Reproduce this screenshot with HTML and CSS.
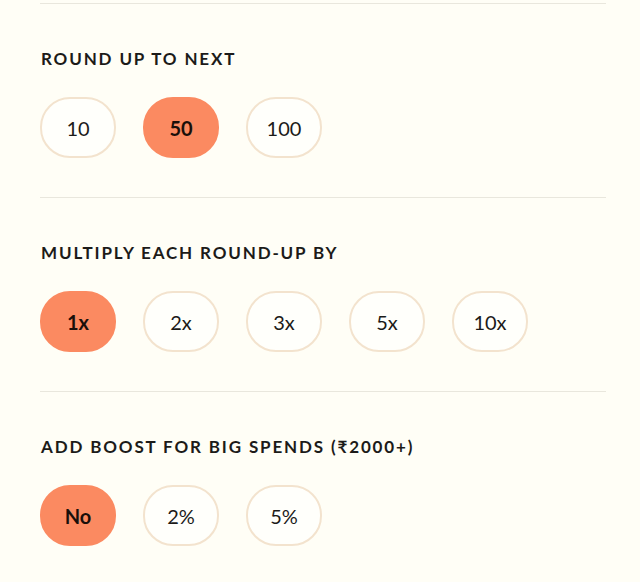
FILE: index.html
```html
<!DOCTYPE html>
<html>
<head>
<meta charset="utf-8">
<link rel="stylesheet" href="styles.css">
</head>
<body>
<div class="panel">
  <section class="group">
    <h3 class="label">ROUND UP TO NEXT</h3>
    <div class="options">
      <button class="chip">10</button>
      <button class="chip active">50</button>
      <button class="chip">100</button>
    </div>
  </section>
  <section class="group">
    <h3 class="label">MULTIPLY EACH ROUND-UP BY</h3>
    <div class="options">
      <button class="chip active">1x</button>
      <button class="chip">2x</button>
      <button class="chip">3x</button>
      <button class="chip">5x</button>
      <button class="chip">10x</button>
    </div>
  </section>
  <section class="group">
    <h3 class="label">ADD BOOST FOR BIG SPENDS (₹2000+)</h3>
    <div class="options">
      <button class="chip active">No</button>
      <button class="chip">2%</button>
      <button class="chip">5%</button>
    </div>
  </section>
</div>
</body>
</html>
```

FILE: styles.css
```css
html, body {
  margin: 0;
  padding: 0;
  background: #fffef6;
  font-family: Lato, "Noto Sans", sans-serif;
  color: #1c1b19;
}
.panel {
  margin: 3px 34px 0 40px;
}
.group {
  border-top: 1px solid #e9e7dd;
  padding: 43px 0 39px;
}
.label {
  margin: 0 0 26px 1px;
  font-size: 17px;
  line-height: 24px;
  font-weight: 700;
  letter-spacing: 1.85px;
}
.options {
  display: flex;
  gap: 27px;
}
.chip {
  width: 76px;
  height: 61px;
  border-radius: 30px;
  border: 2px solid #f3e3ce;
  background: #fffffb;
  font-family: Lato, "Noto Sans", sans-serif;
  font-size: 20px;
  color: #1c1b19;
  padding: 0;
}
.chip.active {
  background: #fb8a61;
  border-color: #fb8a61;
  font-weight: 700;
  color: #1a0f0a;
}
```
